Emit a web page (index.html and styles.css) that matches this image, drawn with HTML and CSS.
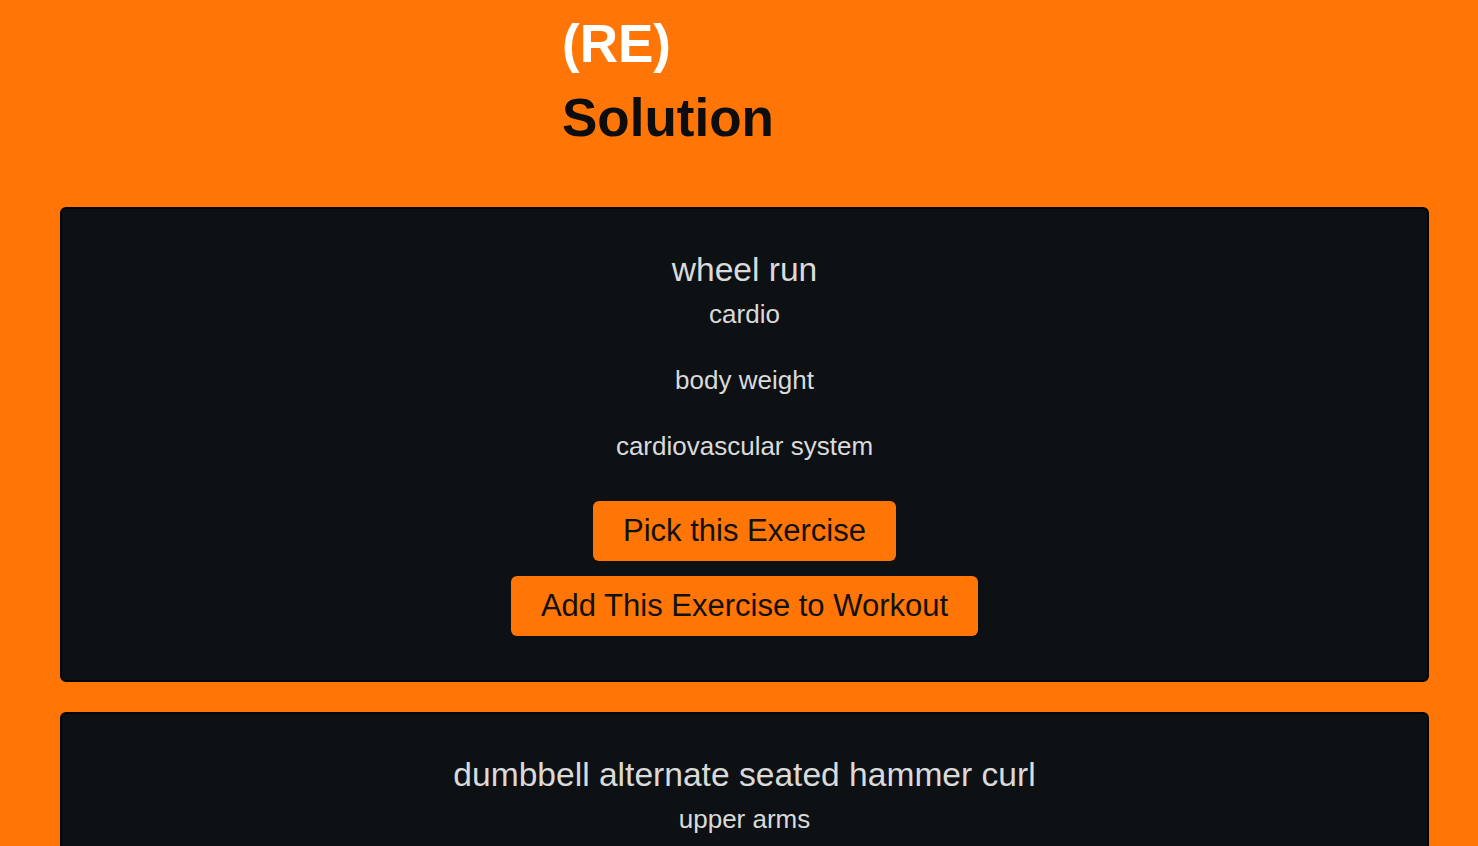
FILE: index.html
```html
<!DOCTYPE html>
<html lang="en">
<head>
<meta charset="utf-8">
<title>(RE) Solution</title>
<link rel="stylesheet" href="styles.css">
</head>
<body>
<header class="site-header">
  <h1 class="brand"><span class="brand-re">(RE)</span> <span class="brand-name">Solution</span></h1>
</header>
<main class="exercise-list">
  <section class="card">
    <h2 class="card-title">wheel run</h2>
    <div class="card-info">
      <p>cardio</p>
      <p>body weight</p>
      <p>cardiovascular system</p>
    </div>
    <div class="card-actions">
      <button class="btn">Pick this Exercise</button>
      <button class="btn">Add This Exercise to Workout</button>
    </div>
  </section>
  <section class="card">
    <h2 class="card-title">dumbbell alternate seated hammer curl</h2>
    <div class="card-info">
      <p>upper arms</p>
      <p>dumbbell</p>
      <p>biceps</p>
    </div>
    <div class="card-actions">
      <button class="btn">Pick this Exercise</button>
      <button class="btn">Add This Exercise to Workout</button>
    </div>
  </section>
</main>
</body>
</html>
```

FILE: styles.css
```css
html, body {
  margin: 0;
  padding: 0;
}
body {
  background: #ff7606;
  font-family: "Liberation Sans", Arial, sans-serif;
  color: #111;
}
.site-header {
  padding: 7px 0 0 562px;
}
.brand {
  margin: 0;
  font-size: 53px;
  line-height: 74px;
  font-weight: bold;
  width: 300px;
}
.brand-re {
  color: #ffffff;
}
.brand-name {
  color: #0d0d0d;
}
.exercise-list {
  display: flex;
  flex-direction: column;
  gap: 30px;
  padding: 52px 49px 40px 60px;
}
.card {
  background: #0d1114;
  border: 2px solid #040607;
  border-radius: 6px;
  padding: 42px 20px 44px;
  display: flex;
  flex-direction: column;
  align-items: center;
  text-align: center;
  color: #dadada;
}
.card-title {
  margin: 0 0 10px;
  font-size: 33.6px;
  font-weight: normal;
  line-height: 38px;
}
.card-info {
  display: flex;
  flex-direction: column;
  gap: 36px;
}
.card-info p {
  margin: 0;
  font-size: 26px;
  line-height: 30px;
}
.card-actions {
  margin-top: 40px;
  display: flex;
  flex-direction: column;
  align-items: center;
  gap: 15px;
}
.btn {
  font-family: "Liberation Sans", Arial, sans-serif;
  font-size: 31px;
  line-height: 36px;
  padding: 12px 30px;
  background: #ff7606;
  color: #111;
  border: none;
  border-radius: 6px;
  cursor: pointer;
}
```
